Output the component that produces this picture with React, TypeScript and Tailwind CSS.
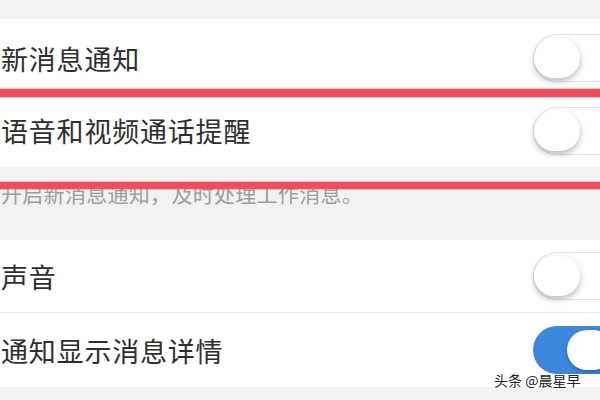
import React from "react";

function Toggle({ on = false }: { on?: boolean }) {
  if (on) {
    return (
      <div className="relative mr-[-27px] h-[48px] w-[94px] shrink-0 rounded-full bg-[#3d86de]">
        <div className="absolute left-[34px] top-[4px] h-[40px] w-[46px] rounded-full bg-white shadow-[0_2px_4px_rgba(0,0,0,0.25)]" />
      </div>
    );
  }
  return (
    <div className="relative mr-[-27px] h-[48px] w-[94px] shrink-0 rounded-full border-[1.5px] border-[#e2e2e2] bg-white">
      <div className="absolute left-[0px] top-[3px] h-[40px] w-[46px] rounded-full bg-white shadow-[0_3px_6px_rgba(0,0,0,0.28)]" />
    </div>
  );
}

function Row({ label, on, h }: { label: string; on?: boolean; h: string }) {
  return (
    <div className={`flex items-center justify-between bg-white pl-[1px] ${h}`}>
      <span className="text-[27px] leading-none tracking-[0.8px] text-[#2e2e2e]">{label}</span>
      <Toggle on={on} />
    </div>
  );
}

export default function App() {
  return (
    <div
      className="relative h-[400px] w-[600px] overflow-hidden bg-[#f2f2f2]"
      style={{ fontFamily: '"Noto Sans CJK SC", "Noto Sans", sans-serif' }}
    >
      <div className="pt-[19px]">
        <div className="flex flex-col">
          <div className="flex h-[74px] items-center justify-between bg-white pl-[1px] pt-[4px]">
            <span className="text-[27px] leading-none tracking-[0.8px] text-[#2e2e2e]">新消息通知</span>
            <Toggle />
          </div>
          <div className="h-px bg-[#ececec]" />
          <Row label="语音和视频通话提醒" h="h-[73px]" />
        </div>
        <div className="h-[73px] pl-[1px] pt-[16px] text-[21px] leading-[21px] tracking-[0.3px] text-[#9c9c9c]">
          开启新消息通知，及时处理工作消息。
        </div>
        <div className="flex flex-col">
          <Row label="声音" h="h-[72px]" />
          <div className="h-px bg-[#ececec]" />
          <Row label="通知显示消息详情" on h="h-[74px]" />
        </div>
      </div>

      <div className="absolute left-0 top-[89px] h-[8px] w-full bg-[#f24b5a] shadow-[0_0_0_1px_rgba(242,75,90,0.3)]" />
      <div className="absolute left-0 top-[182px] h-[7px] w-full bg-[#f24b5a] shadow-[0_0_0_1px_rgba(242,75,90,0.3)]" />

      <div
        className="absolute left-[494px] top-[372px] text-[14px] leading-[16px] text-[#222]"
        style={{
          textShadow:
            "1px 0 0 #fff, -1px 0 0 #fff, 0 1px 0 #fff, 0 -1px 0 #fff, 1px 1px 0 #fff, -1px -1px 0 #fff, 1px -1px 0 #fff, -1px 1px 0 #fff",
        }}
      >
        头条 @晨星早
      </div>
    </div>
  );
}
